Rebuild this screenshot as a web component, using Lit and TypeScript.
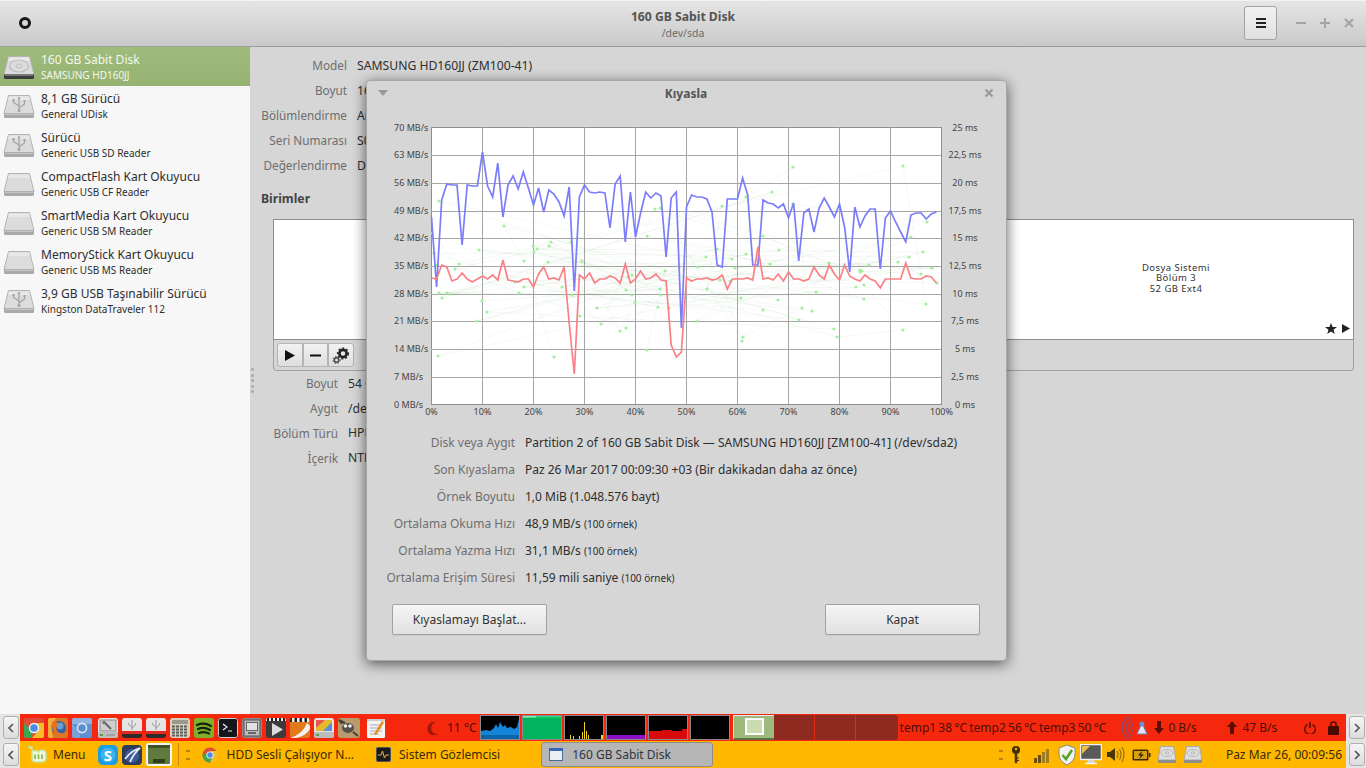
import { LitElement, html, css, svg } from 'lit';
import { customElement } from 'lit/decorators.js';

const icon = (body: unknown, w = 20, h = 20, cls = '') =>
  html`<svg class=${cls} width=${w} height=${h} viewBox="0 0 ${w} ${h}">${body}</svg>`;

// sidebar drive icons
const driveBase = (dark = false) => svg`
  <path d="M5.5 .5H26.5L31 18.5H1Z" fill="#dcdcdc" stroke="#b4b4b4"/>
  <path d="M6 1.5H26L27 5H5Z" fill="#e8e8e8"/>
  <path d="M1 18.5H31V21.5Q31 23 29.5 23H2.5Q1 23 1 21.5Z" fill=${dark ? '#3c3c3c' : '#a9a9a9'}/>
  <path d="M2 19.5H30" stroke=${dark ? '#777' : '#c6c6c6'}/>`;
const hddGlyph = svg`
  <ellipse cx="16" cy="10" rx="9.5" ry="6" fill="none" stroke="#bcbcbc" stroke-width="1.2"/>
  <ellipse cx="16" cy="10" rx="3" ry="2" fill="none" stroke="#bcbcbc"/>`;
const usbGlyph = svg`
  <path d="M16 3V15M16 11L10.5 7.5V5.5M16 13L21.5 9V6.5" fill="none" stroke="#a2a2a2" stroke-width="1.2"/>
  <path d="M16 1.5L14.4 4H17.6ZM9.4 4H11.6V6H9.4ZM20.5 5H22.5V7H20.5Z" fill="#a2a2a2"/>
  <circle cx="16" cy="15.5" r="1.5" fill="#a2a2a2"/>`;
const driveIcon = (kind: string) =>
  icon(svg`${driveBase(kind === 'hdd')}${kind === 'hdd' ? hddGlyph : kind === 'usb' ? usbGlyph : ''}`, 32, 24);

const panelDisk = icon(svg`
  <path d="M3.5 1.5H16.5L19 15H1Z" fill="#dedede" stroke="#a8a8a8"/>
  <ellipse cx="10" cy="8" rx="6" ry="3.5" fill="none" stroke="#b8b8b8"/>
  <ellipse cx="10" cy="8" rx="2" ry="1.2" fill="none" stroke="#b8b8b8"/>
  <path d="M1 15H19V17Q19 18 18 18H2Q1 18 1 17Z" fill="#8e8e8e"/>`);

const chevronLeft = icon(svg`<path d="M5 1L1 5L5 9" fill="none" stroke="#555" stroke-width="1.600"/>`, 6, 10);
const chevronRight = icon(svg`<path d="M1 1L5 5L1 9" fill="none" stroke="#555" stroke-width="1.600"/>`, 6, 10);

const launchers = [
  // chrome
  svg`<rect width="20" height="20" fill="#dd4b39"/>
    <polygon points="0,5 9,14 7,20 0,20" fill="#3aa757"/>
    <polygon points="20,5 10,5 14,13 8,20 20,20" fill="#f2bf2a"/>
    <circle cx="10" cy="10" r="5.2" fill="#f4f4f4"/><circle cx="10" cy="10" r="3.8" fill="#4a8be8"/>`,
  // firefox
  svg`<rect width="20" height="20" fill="#d8782a"/><path d="M0 0H8L3 8L5 20H0Z" fill="#efb23a"/>
    <circle cx="11" cy="10" r="7" fill="#2f63a8"/><circle cx="12" cy="8" r="3.5" fill="#6d9bd4"/>
    <path d="M4 3Q3 12 8 17Q14 20 18 14Q12 17 9 13Q7 9 11 5Q7 4 4 3Z" fill="#e9711c"/>`,
  // chromium
  svg`<rect width="20" height="20" fill="#5f90cf"/><path d="M0 6H20V0H0Z" fill="#8fb2de"/>
    <path d="M0 20V5L8 15V20Z" fill="#78a2d8"/>
    <circle cx="10" cy="10" r="5.4" fill="#dbe6f4"/><circle cx="10" cy="10" r="3.8" fill="#5c8fd0"/>`,
  // disk tool
  svg`<rect width="20" height="20" rx="2" fill="#e6e6e6"/><rect x="2" y="2" width="16" height="11" fill="#cfcfcf" stroke="#8c8c8c"/>
    <path d="M6 4L13 11" stroke="#666" stroke-width="2"/><circle cx="6" cy="4.5" r="1.8" fill="#777"/>
    <rect y="14" width="20" height="6" fill="#bdbdbd"/><rect x="2" y="16" width="3" height="2" fill="#5a9a4a"/><path d="M8 17H17" stroke="#888"/>`,
  // usb drives
  svg`<rect width="20" height="15" rx="2" fill="#e4e4e4"/><path d="M10 2V12M10 9L6.5 6.5V5M10 10L13.5 7V5.5" stroke="#999" fill="none"/>
    <rect y="13" width="20" height="3" fill="#e02a20"/><path d="M0 16H20V18Q20 20 18 20H2Q0 20 0 18Z" fill="#2c2c2c"/>`,
  svg`<rect width="20" height="15" rx="2" fill="#e4e4e4"/><path d="M10 2V12M10 9L6.5 6.5V5M10 10L13.5 7V5.5" stroke="#999" fill="none"/>
    <rect y="13" width="20" height="3" fill="#e02a20"/><path d="M0 16H20V18Q20 20 18 20H2Q0 20 0 18Z" fill="#2c2c2c"/>`,
  // calculator
  svg`<rect width="20" height="20" rx="2" fill="#d6d0bc"/><rect x="2" y="2" width="16" height="4" fill="#9a9a8c"/>
    ${[8, 11, 14, 17].flatMap(y => [2, 6, 10, 14].map(x => svg`<rect x=${x} y=${y - 0.5} width="3" height="2" fill="#5c5c5c"/>`))}`,
  // spotify
  svg`<rect width="20" height="20" rx="2" fill="#7fb02a"/>
    <path d="M3 7Q10 4 17 8M4 11Q10 8.500 16 12M5 15Q10 13 15 15.500" fill="none" stroke="#16240a" stroke-width="2.200" stroke-linecap="round"/>`,
  // terminal
  svg`<rect width="20" height="20" rx="2" fill="#15151c"/><rect x=".5" y=".5" width="19" height="19" rx="2" fill="none" stroke="#cfcfd6"/>
    <path d="M5 6L9 9L5 12" fill="none" stroke="#e8e8e8" stroke-width="1.200"/><path d="M10 13H14" stroke="#e8e8e8" stroke-width="1.200"/>`,
  // screen viewer
  svg`<rect width="20" height="20" rx="2" fill="#8b8b8b"/><rect x="2" y="2" width="16" height="16" fill="#bcbcbc" stroke="#555"/>
    <rect x="4.500" y="4.500" width="11" height="8" fill="#e2e2e2" stroke="#666"/><rect x="6" y="14" width="8" height="2" fill="#666"/>`,
  // media player
  svg`<rect width="20" height="20" rx="2" fill="#3c3c3c"/><path d="M0 0H20V3H0Z" fill="#eee"/>
    ${[1, 5, 9, 13, 17].map(x => svg`<rect x=${x} width="2" height="3" fill="#222"/>`)}
    <path d="M6 5L17 11.500L6 18Z" fill="#dcdcdc"/>`,
  // video editor
  svg`<rect width="20" height="20" rx="2" fill="#e07a1a"/><path d="M0 0H20V4H0Z" fill="#222"/>
    ${[2, 7, 12, 17].map(x => svg`<rect x=${x} width="2.500" height="4" fill="#eee"/>`)}
    <path d="M0 20Q13 16 17 5L20 8V11Q16 18 6 20Z" fill="#f0f0f0"/>`,
  // partition chart
  svg`<rect width="20" height="20" rx="2" fill="#e4e4e4"/><rect x="2" y="2" width="16" height="11" fill="#e4b92c"/>
    <path d="M2 2H11L2 10Z" fill="#e05a50"/><path d="M9 13L18 4V13Z" fill="#5a8fd8"/>
    <rect y="14" width="20" height="6" fill="#bcbcbc"/><rect x="2" y="16" width="3" height="2" fill="#5a9a4a"/>`,
  // gimp
  svg`<rect width="22" height="20" rx="2" fill="#b89a6c"/><ellipse cx="10" cy="10" rx="6" ry="5" fill="#55504a"/>
    <circle cx="7.500" cy="8" r="1.800" fill="#eee"/><circle cx="12" cy="8" r="1.800" fill="#eee"/>
    <path d="M4 6L1 2L7 5M15 14L20 18" stroke="#44403a" stroke-width="2" fill="none"/>`,
  // notes
  svg`<rect x="1" y="1" width="18" height="19" rx="1" fill="#f4f4f0"/><path d="M1 1H19V3H1Z" fill="#ccc"/>
    <path d="M4 7H16M4 10H16M4 13H16M4 16H13" stroke="#a8a8b8"/>
    <path d="M8 16L16 3L18 4.500L10 17Z" fill="#e8891a"/>`,
];
const launcherShift = ['', '', '', 'gap2', '', '', '', '', '', '', '', '', '', '', 'gap2'];

@customElement('bench-chart')
class BenchChart extends LitElement {
  static styles = css`
    :host { display: block; }
    svg { display: block; font-family: 'Noto Sans', sans-serif; font-size: 9px; fill: #444; }
    .plot { fill: #fff; stroke: #8f8f8f; }
    .grid { stroke: #a6a6a6; stroke-width: 1; }
    .seek { fill: none; stroke: rgba(120, 165, 120, .09); stroke-width: .8; }
    .dot { fill: #a2f09e; stroke: none; }
    .read { fill: none; stroke: #7b7dfa; stroke-width: 1.7; }
    .write { fill: none; stroke: #fb8086; stroke-width: 1.7; }
  `;

  static readY = [217, 287, 200, 184, 185, 185, 245, 185, 186, 186, 152, 186, 197, 163, 217, 185, 176, 189, 172, 188,
    205, 188, 212, 190, 194, 202, 216, 187, 291, 197, 185, 192, 193, 192, 193, 228, 184, 176, 242, 192,
    237, 213, 192, 198, 193, 196, 257, 198, 192, 328, 207, 195, 197, 197, 199, 212, 265, 267, 199, 199,
    199, 178, 195, 265, 265, 200, 203, 204, 208, 204, 218, 203, 261, 213, 209, 232, 208, 198, 207, 217,
    204, 227, 272, 207, 227, 216, 209, 209, 269, 218, 211, 222, 232, 242, 215, 213, 213, 219, 214, 212];

  static writeY = [278, 279, 265, 267, 281, 279, 273, 279, 282, 279, 276, 279, 275, 280, 260, 280, 281, 282, 279, 279,
    287, 274, 267, 279, 278, 280, 267, 323, 374, 275, 279, 273, 283, 279, 279, 276, 278, 283, 264, 283,
    279, 271, 279, 278, 274, 280, 281, 345, 357, 352, 278, 281, 279, 279, 278, 280, 279, 275, 289, 279,
    279, 279, 278, 280, 247, 279, 278, 280, 274, 281, 272, 279, 279, 281, 279, 267, 275, 279, 265, 274,
    280, 265, 276, 279, 281, 275, 279, 281, 288, 279, 279, 279, 279, 263, 278, 279, 279, 276, 277, 283];

  // seek samples, page pixels
  static dots: [number, number][] = [
    [439, 201], [432, 233], [434, 253], [437, 265], [504, 226], [479, 250], [459, 264], [455, 269], [533, 246], [537, 249],
    [534, 252], [551, 242], [549, 246], [524, 261], [548, 262], [571, 242], [582, 261], [647, 236], [655, 209], [660, 208],
    [439, 293], [447, 293], [451, 294], [442, 298], [482, 301], [487, 312], [477, 321], [438, 356], [515, 282], [519, 293],
    [524, 287], [562, 287], [572, 295], [580, 316], [554, 357], [597, 308], [601, 324], [620, 331], [626, 328], [626, 290],
    [632, 295], [635, 302], [628, 277], [632, 275], [665, 271], [660, 289], [661, 295], [658, 307], [669, 308], [647, 350],
    [793, 167], [903, 166], [772, 192], [722, 206], [746, 197], [793, 204], [763, 236], [779, 250], [717, 249], [706, 257],
    [732, 259], [746, 254], [698, 267], [735, 268], [770, 264], [799, 253], [829, 263], [869, 265], [898, 262], [909, 257],
    [923, 252], [932, 268], [911, 237], [927, 222], [720, 280], [707, 289], [730, 281], [741, 298], [763, 310], [778, 300],
    [816, 292], [802, 308], [812, 311], [799, 320], [834, 329], [837, 337], [743, 337], [742, 341], [697, 321], [860, 272],
    [862, 271], [856, 287], [864, 285], [864, 299], [921, 274], [932, 268], [937, 283], [926, 304], [903, 330], [860, 270],
  ];

  private seekPath() {
    // keep the sample order stable between renders
    let seed = 20170326;
    const next = () => (seed = (seed * 1664525 + 1013904223) >>> 0) / 4294967296;
    const order = BenchChart.dots.slice();
    for (let i = order.length - 1; i > 0; i--) {
      const j = Math.floor(next() * (i + 1));
      [order[i], order[j]] = [order[j], order[i]];
    }
    return 'M' + order.map(p => p.join(' ')).join('L');
  }

  private line(ys: number[]) {
    return 'M' + ys.map((y, i) => `${(431.5 + i * 5.1).toFixed(1)} ${y}`).join('L');
  }

  render() {
    const top = 127.5;
    const step = 277 / 10;
    const rowY = Array.from({ length: 11 }, (_, i) => top + i * step);
    const colX = Array.from({ length: 11 }, (_, i) => 431.5 + i * 51);
    const rates = [70, 63, 56, 49, 42, 35, 28, 21, 14, 7, 0];
    const times = ['25', '22,5', '20', '17,5', '15', '12,5', '10', '7,5', '5', '2,5', '0'];
    return html`<svg width="639" height="321" viewBox="367 107 639 321">
      <rect class="plot" x="431.5" y="127.5" width="510" height="277"/>
      ${rowY.slice(1, 10).map(y => svg`<path class="grid" d="M431 ${Math.round(y) + 0.5}H941"/>`)}
      ${colX.slice(1, 10).map(x => svg`<path class="grid" d="M${x} 127V404"/>`)}
      <path class="seek" d=${this.seekPath()}/>
      ${BenchChart.dots.map(([x, y]) => svg`<circle class="dot" cx=${x} cy=${y} r="1.600"/>`)}
      <path class="read" d=${this.line(BenchChart.readY)}/>
      <path class="write" d=${this.line(BenchChart.writeY)}/>
      ${rates.map((r, i) => svg`<text x="394" y=${rowY[i] + 3}>${r} MB/s</text>`)}
      ${times.map((t, i) => svg`<text x="965" y=${rowY[i] + 3} text-anchor="middle">${t} ms</text>`)}
      ${colX.map((x, i) => svg`<text x=${x} y="415" text-anchor="middle">${i * 10}%</text>`)}
    </svg>`;
  }
}

@customElement('bench-dialog')
class BenchDialog extends LitElement {
  static styles = css`
    :host {
      position: absolute; left: 366px; top: 80px; width: 641px; height: 581px; box-sizing: border-box;
      display: flex; flex-direction: column; background: #d6d6d6; border: 1px solid #a8a8a8; border-radius: 4px;
      box-shadow: 0 3px 14px rgba(0, 0, 0, .6); font: 12px 'Noto Sans', sans-serif; color: #2e2e2e;
    }
    .title { height: 26px; box-sizing: border-box; flex: none; display: flex; align-items: center; justify-content: space-between; padding: 0 12px 2px 11px; }
    .title b { font-weight: 700; color: #555; }
    .title svg { display: block; }
    .info { display: grid; grid-template-columns: 148px 1fr; column-gap: 10px; grid-auto-rows: 27px; align-items: center; margin-top: 1px; }
    .k { text-align: right; color: #6e6e6e; white-space: nowrap; }
    .v { white-space: nowrap; }
    small { font-size: 10px; }
    .actions { display: flex; justify-content: space-between; padding: 13px 26px 0 25px; }
    button {
      width: 155px; height: 31px; font: 12px 'Noto Sans', sans-serif; color: #333; border: 1px solid #a2a2a2; border-radius: 2px;
      background: linear-gradient(#f6f6f6, #e0e0e0); box-shadow: 0 1px 0 rgba(0,0,0,.06);
    }
  `;

  render() {
    return html`
      <div class="title">
        ${icon(svg`<path d="M0 1H10L5 7Z" fill="#9a9a9a"/>`, 10, 8)}
        <b>Kıyasla</b>
        ${icon(svg`<path d="M1.500 1.500L8.500 8.500M8.500 1.500L1.500 8.500" stroke="#9a9a9a" stroke-width="2.200"/>`, 10, 10)}
      </div>
      <bench-chart></bench-chart>
      <div class="info">
        <div class="k">Disk veya Aygıt</div><div class="v">Partition 2 of 160 GB Sabit Disk — SAMSUNG HD160JJ [ZM100-41] (/dev/sda2)</div>
        <div class="k">Son Kıyaslama</div><div class="v">Paz 26 Mar 2017 00:09:30 +03 (Bir dakikadan daha az önce)</div>
        <div class="k">Örnek Boyutu</div><div class="v">1,0 MiB (1.048.576 bayt)</div>
        <div class="k">Ortalama Okuma Hızı</div><div class="v">48,9 MB/s <small>(100 örnek)</small></div>
        <div class="k">Ortalama Yazma Hızı</div><div class="v">31,1 MB/s <small>(100 örnek)</small></div>
        <div class="k">Ortalama Erişim Süresi</div><div class="v">11,59 mili saniye <small>(100 örnek)</small></div>
      </div>
      <div class="actions">
        <button>Kıyaslamayı Başlat...</button>
        <button>Kapat</button>
      </div>
    `;
  }
}

@customElement('disk-window')
class DiskWindow extends LitElement {
  static styles = css`
    :host { display: flex; flex-direction: column; height: 714px; font: 12.2px 'Noto Sans', sans-serif; color: #2e2e2e; }
    header {
      height: 47px; flex: none; box-sizing: border-box; border-bottom: 1px solid #9c9c9c; display: flex; align-items: center;
      background: linear-gradient(#e6e6e6, #c9c9c9); box-shadow: inset 0 1px 0 #f4f4f4; padding: 0 10px 0 18px;
    }
    .head-title { flex: 1; text-align: center; line-height: 16px; padding-left: 90px; padding-top: 3px; }
    .head-title b { display: block; color: #555; font-weight: 700; }
    .head-title span { color: #6c6c6c; font-size: 10.5px; }
    .menu {
      width: 33px; height: 34px; box-sizing: border-box; border: 1px solid #a2a2a2; border-radius: 3px; margin-right: 17px;
      background: linear-gradient(#f2f2f2, #e0e0e0); display: flex; align-items: center; justify-content: center;
    }
    .wm { display: flex; gap: 10px; }
    .wm svg, .menu svg, header > svg { display: block; }
    .body { flex: 1; display: flex; min-height: 0; }
    aside { width: 250px; flex: none; background: #f7f7f7; }
    .drive { height: 39px; display: flex; align-items: center; gap: 6px; padding-left: 3px; font-size: 12px; }
    .drive svg { flex: none; margin-top: 2px; }
    .drive.on { background: linear-gradient(#9fbc7c, #95b272); color: #f4f8ee; }
    .drive .text { padding-top: 1px; }
    .drive b { display: block; font-weight: 400; line-height: 16px; }
    .drive span { font-size: 10px; line-height: 15px; display: block; }
    main { flex: 1; background: #d6d6d6; position: relative; padding-top: 6px; min-width: 0; }
    .rows { display: grid; grid-template-columns: 97px 1fr; column-gap: 10px; grid-auto-rows: 25px; align-items: center; }
    .rows.low { grid-template-columns: 88px 1fr; grid-auto-rows: 24.8px; }
    .k { text-align: right; color: #6e6e6e; white-space: nowrap; font-size: 11.75px; }
    .rows:not(.low) .k { padding-bottom: 2px; }
    .v { white-space: nowrap; }
    h3 { font: 700 12.2px/17px 'Noto Sans', sans-serif; margin: 12px 0 12px 11px; color: #444; }
    .volumes { margin-left: 23px; width: 1081px; height: 121px; box-sizing: border-box; border: 1px solid #8e8e8e; background: #fff; display: flex; }
    .part { flex: 1; }
    .part.fs {
      flex: none; width: 354px; position: relative; display: flex; flex-direction: column; align-items: center; justify-content: center;
      font-size: 9.500px; line-height: 10.500px; letter-spacing: .45px; padding-bottom: 2px; box-sizing: border-box; color: #333;
    }
    .marks { position: absolute; right: 3px; bottom: 5px; display: flex; gap: 5px; }
    .tools {
      margin-left: 23px; width: 1081px; height: 31px; box-sizing: border-box; border: 1px solid #a0a0a0; border-top: 0; border-radius: 0 0 4px 4px;
      padding: 3px 3px; display: flex;
    }
    .tools button {
      width: 25.500px; height: 24px; padding: 0; border: 1px solid #b4b4b4; background: linear-gradient(#f2f2f2, #dedede);
      display: flex; align-items: center; justify-content: center; border-radius: 0;
    }
    .tools button:first-child { border-radius: 3px 0 0 3px; }
    .tools button:last-child { border-radius: 0 3px 3px 0; }
    .sash { position: absolute; left: 1px; top: 321px; display: grid; gap: 2.500px; }
    .sash i { display: block; width: 3px; height: 3px; background: #a8a8a8; border-radius: 50%; }
  `;

  private drives = [
    ['hdd', '160 GB Sabit Disk', 'SAMSUNG HD160JJ'],
    ['usb', '8,1 GB Sürücü', 'General UDisk'],
    ['usb', 'Sürücü', 'Generic USB SD Reader'],
    ['card', 'CompactFlash Kart Okuyucu', 'Generic USB CF Reader'],
    ['card', 'SmartMedia Kart Okuyucu', 'Generic USB SM Reader'],
    ['card', 'MemoryStick Kart Okuyucu', 'Generic USB MS Reader'],
    ['usb', '3,9 GB USB Taşınabilir Sürücü', 'Kingston DataTraveler 112'],
  ];

  render() {
    return html`
      <header>
        ${icon(svg`<circle cx="7" cy="7" r="4.500" fill="none" stroke="#161616" stroke-width="3"/>`, 14, 14)}
        <div class="head-title"><b>160 GB Sabit Disk</b><span>/dev/sda</span></div>
        <div class="menu">${icon(svg`<path d="M0 2H10M0 6H10M0 10H10" stroke="#222" stroke-width="2"/>`, 10, 12)}</div>
        <div class="wm">
          ${icon(svg`<path d="M2 8H12" stroke="#a4a4a4" stroke-width="2"/>`, 14, 16)}
          ${icon(svg`<path d="M2 8H12M7 3V13" stroke="#a4a4a4" stroke-width="2"/>`, 14, 16)}
          ${icon(svg`<path d="M3 4L11 12M11 4L3 12" stroke="#a4a4a4" stroke-width="2.200"/>`, 14, 16)}
        </div>
      </header>
      <div class="body">
        <aside>
          ${this.drives.map(([kind, name, sub], i) => html`
            <div class="drive ${i === 0 ? 'on' : ''}">
              ${driveIcon(kind)}
              <div class="text"><b>${name}</b><span>${sub}</span></div>
            </div>`)}
        </aside>
        <main>
          <div class="rows">
            <div class="k">Model</div><div class="v">SAMSUNG HD160JJ (ZM100-41)</div>
            <div class="k">Boyut</div><div class="v">160 GB</div>
            <div class="k">Bölümlendirme</div><div class="v">Ana</div>
            <div class="k">Seri Numarası</div><div class="v">S0DFJ</div>
            <div class="k">Değerlendirme</div><div class="v">Disk</div>
          </div>
          <h3>Birimler</h3>
          <div class="volumes">
            <div class="part"></div>
            <div class="part fs">
              <div>Dosya Sistemi</div><div>Bölüm 3</div><div>52 GB Ext4</div>
              <div class="marks">
                ${icon(svg`<path d="M6 0L7.600 4H12L8.500 6.700L9.800 11L6 8.400L2.200 11L3.500 6.700L0 4H4.400Z" fill="#222"/>`, 12, 11)}
                ${icon(svg`<path d="M0 1L8 5.500L0 10Z" fill="#222"/>`, 8, 11)}
              </div>
            </div>
          </div>
          <div class="tools">
            <button>${icon(svg`<path d="M1 1L11 6.500L1 12Z" fill="#111"/>`, 12, 13)}</button>
            <button>${icon(svg`<path d="M0 1.500H11" stroke="#111" stroke-width="2"/>`, 11, 3)}</button>
            <button>${icon(svg`
              <circle cx="11" cy="6.500" r="3.600" fill="none" stroke="#222" stroke-width="2.600"/>
              <circle cx="11" cy="6.500" r="5.400" fill="none" stroke="#222" stroke-width="1.400" stroke-dasharray="2 2"/>
              <circle cx="4.500" cy="13" r="2.200" fill="none" stroke="#444" stroke-width="1.400"/>
              <circle cx="4.500" cy="13" r="3.600" fill="none" stroke="#444" stroke-width="1" stroke-dasharray="1.500 1.500"/>`, 17, 17)}</button>
          </div>
          <div class="rows low">
            <div class="k">Boyut</div><div class="v">54 GB</div>
            <div class="k">Aygıt</div><div class="v">/dev</div>
            <div class="k">Bölüm Türü</div><div class="v">HPFS</div>
            <div class="k">İçerik</div><div class="v">NTFS</div>
          </div>
          <div class="sash">${[0, 1, 2, 3, 4].map(() => html`<i></i>`)}</div>
        </main>
      </div>
    `;
  }
}

@customElement('bottom-panels')
class BottomPanels extends LitElement {
  static styles = css`
    :host { display: block; height: 54px; background: #e4e4e4; font: 12px 'Noto Sans', sans-serif; }
    .row { display: flex; height: 27px; }
    .end {
      width: 20px; flex: none; display: flex; align-items: center; justify-content: center; padding-left: 1px; box-sizing: border-box;
    }
    .end div {
      width: 16px; height: 23px; border: 1px solid #b0b0b0; border-radius: 3px; background: linear-gradient(#f6f6f6, #dcdcdc);
      display: flex; align-items: center; justify-content: center; box-sizing: border-box;
    }
    .end.right { padding-left: 2px; }
    .bar { flex: 1; display: flex; align-items: center; min-width: 0; white-space: nowrap; }
    .red { background: #f5280e; color: #4a1006; padding-left: 4px; }
    .yellow { background: #ffb700; color: #3c2a06; }
    svg { display: block; flex: none; }
    .launch { display: flex; gap: 4px; }
    .launch svg { border-radius: 2px; }
    .gap2 { margin-left: 2px; }
    .weather { margin-left: 41px; display: flex; align-items: center; gap: 9px; }
    .graphs { display: flex; gap: 2px; margin-left: 3px; }
    .graph { width: 40px; height: 25px; box-sizing: border-box; border: 1px solid #8a8a8a; background: #000; }
    .spaces { display: flex; margin-left: 3px; height: 25px; }
    .ws { width: 41px; background: #8f2a20; border-right: 1px solid #e32a14; box-sizing: border-box; }
    .ws:last-child { border-right: 0; border-radius: 0 3px 3px 0; width: 42px; }
    .ws.on {
      background: #9db97c; border: 1px solid #e8e8e8; border-bottom: 2px solid #5c7040; border-right: 0; display: flex; padding: 2px 0 0 11px;
    }
    .ws.on i { display: block; width: 19px; height: 17px; box-sizing: border-box; border: 2px solid #fff; background: #cbdcb2; }
    .temps { margin-left: 2px; word-spacing: -.9px; }
    .antenna { margin-left: 13px; }
    .antenna2 { margin-left: 1px; }
    .down { margin-left: 5px; }
    .rate { margin-left: 4px; }
    .up { margin-left: 31px; }
    .up + .rate { margin-left: 5px; }
    .power { margin-left: 27px; }
    .lock { margin-left: 12px; }
    .mint { margin-left: 7px; }
    .menu-label { margin-left: 6px; }
    .quick { display: flex; gap: 4px; margin-left: 13px; align-items: center; }
    .desk { width: 26px; height: 23px; box-sizing: border-box; border: 2px solid #f4f4f4; border-radius: 3px; background: #5f7a3c; display: flex; flex-direction: column; }
    .desk::before { content: ''; height: 3px; background: #3d5228; }
    .desk::after { content: ''; height: 4px; width: 12px; margin: auto auto 1px; background: #2d3f1b; }
    .sep { width: 1px; height: 23px; background: #c78a05; margin-left: 6px; }
    .handle { margin-left: 7px; width: 4px; height: 10px; border-top: 2px dotted #b58410; border-bottom: 2px dotted #b58410; box-sizing: border-box; }
    .task-ic { margin-left: 12px; }
    .task { margin-left: 8px; }
    .ic2 { margin-left: 22px; }
    .active {
      margin-left: 41px; width: 172px; height: 25px; box-sizing: border-box; display: flex; align-items: center; gap: 9px; padding-left: 7px;
      background: #b6b6b6; border: 1px solid #8d8d8d; border-radius: 3px; color: #2d3540;
    }
    .tray { margin-left: auto; display: flex; align-items: center; }
    .tray .handle { margin-left: 0; margin-right: 8px; }
    .m3 { margin-left: 3px; }
    .m5 { margin-left: 5px; }
    .m6 { margin-left: 6px; }
    .m7 { margin-left: 7px; }
    .m8 { margin-left: 8px; }
    .m13 { margin-left: 13px; }
    .clock { margin-left: 23px; margin-right: 4px; }
  `;

  private graph(body: unknown) {
    return html`<svg class="graph" viewBox="0 0 38 23" preserveAspectRatio="none">${body}</svg>`;
  }

  render() {
    const cpu = 'M0 15L5 14L9 15L13 12L15 8L17 12L19 6L22 11L24 9L26 12L30 11L33 13L36 11L38 3V23H0Z';
    return html`
      <div class="row">
        <div class="end"><div>${chevronLeft}</div></div>
        <div class="bar red">
          <div class="launch">${launchers.map((l, i) => html`<svg class=${launcherShift[i]} width=${i === 13 ? 22 : 20} height="20" viewBox="0 0 ${i === 13 ? 22 : 20} 20">${l}</svg>`)}</div>
          <div class="weather">
            ${icon(svg`<path d="M9 1A7 7 0 1 0 12 13A6 6 0 0 1 9 1Z" fill="#a01808"/>`, 11, 14)}
            <span>11 °C</span>
          </div>
          <div class="graphs">
            ${this.graph(svg`<path d=${cpu} fill="#1484d8"/><path d="M0 19H38V23H0Z" fill="#0a64a8"/>`)}
            ${this.graph(svg`<rect width="38" height="23" fill="#00b35c"/><rect width="38" height="1.500" fill="#28d884"/><rect width="13" height="1.500" fill="#8fe8b8"/>`)}
            ${this.graph(svg`<path d="M5 23V19H6V23ZM8 23V20H9V23ZM14 23V20H15V23ZM17 23V16H18V23ZM19 23V6H20V23ZM21 23V15H22V23ZM23 23V19H24V23ZM36 23V19H38V23Z" fill="#f2d21a"/>`)}
            ${this.graph(svg`<rect y="19" width="38" height="4" fill="#8a10c8"/>`)}
            ${this.graph(svg`<path d="M0 15H13V14H23V15H33V13H38V23H0Z" fill="#d80a0a"/>`)}
            ${this.graph('')}
          </div>
          <div class="spaces">
            <div class="ws on"><i></i></div><div class="ws"></div><div class="ws"></div><div class="ws"></div>
          </div>
          <span class="temps">temp1 38 °C temp2 56 °C temp3 50 °C</span>
          ${icon(svg`<path d="M10 1Q2 6 3 13T10 23" fill="none" stroke="#7f4a70" stroke-width="1.500"/><path d="M12 5Q6 9 7 13T12 20" fill="none" stroke="#7f4a70" stroke-width="1.500"/><path d="M14 8Q10 12 14 16" fill="none" stroke="#7f4a70" stroke-width="1.500"/>`, 15, 24, 'antenna')}
          ${icon(svg`<path d="M7 3L2 14H12Z" fill="#dfe6f2" stroke="#6c7fb0"/><circle cx="7" cy="4" r="2.500" fill="#6c8fd8"/>`, 14, 16, 'antenna2')}
          ${icon(svg`<path d="M3 0H7V7H10L5 13L0 7H3Z" fill="#5a0f06"/>`, 10, 13, 'down')}
          <span class="rate">0 B/s</span>
          ${icon(svg`<path d="M3 13H7V6H10L5 0L0 6H3Z" fill="#5a0f06"/>`, 10, 13, 'up')}
          <span class="rate">47 B/s</span>
          ${icon(svg`<path d="M3.500 3.500A5.300 5.300 0 1 0 8.500 3.500" fill="none" stroke="#6c1206" stroke-width="1.600"/><path d="M6 1V7" stroke="#6c1206" stroke-width="1.800"/>`, 12, 13, 'power')}
          ${icon(svg`<path d="M3 6V3Q3 1 5.500 1T8 3V6" fill="none" stroke="#4a0a02" stroke-width="1.500"/><rect y="5" width="11" height="9" rx="1" fill="#4a0a02"/>`, 11, 14, 'lock')}
        </div>
        <div class="end right"><div>${chevronRight}</div></div>
      </div>
      <div class="row">
        <div class="end"><div>${chevronLeft}</div></div>
        <div class="bar yellow">
          ${icon(svg`<path d="M1 1H5V12Q5 16 9 16H15Q19 16 19 12V8Q19 4 15 4Q12 4 11.500 6Q10 4 7 5" fill="#f0f7df" stroke="#c6e29a" stroke-width="1.600"/>
            <path d="M8 13V8.500M11.500 13V8.500M15 13V8.500" stroke="#86b848" stroke-width="1.700"/>`, 20, 18, 'mint')}
          <span class="menu-label">Menu</span>
          <div class="quick">
            ${icon(svg`<rect width="20" height="20" rx="5" fill="#1c9ce4"/><circle cx="10" cy="10" r="7.500" fill="#3cb4f0"/><text x="10" y="15.500" text-anchor="middle" font-family="Noto Sans" font-weight="700" font-size="15" fill="#fff">S</text>`)}
            ${icon(svg`<rect width="20" height="20" rx="4" fill="#2e3a5c"/><circle cx="10" cy="11" r="7" fill="#3c5a98"/><path d="M3 14Q10 5 18 3Q12 8 8 17" fill="none" stroke="#e6ecf6" stroke-width="1.800"/>`)}
            <div class="desk"></div>
          </div>
          <div class="sep"></div>
          <div class="handle"></div>
          ${icon(svg`<circle cx="8" cy="8" r="7.500" fill="#dd4b39"/><path d="M.5 8A7.500 7.500 0 0 0 8 15.500L11.500 9L5 6Z" fill="#3aa757"/><path d="M8 4H15A7.500 7.500 0 0 1 8 15.500L11 9Z" fill="#f2bf2a"/><circle cx="8" cy="8" r="3.600" fill="#f4f4f4"/><circle cx="8" cy="8" r="2.700" fill="#4a8be8"/>`, 16, 16, 'task-ic')}
          <span class="task">HDD Sesli Çalışıyor N...</span>
          ${icon(svg`<rect width="15" height="15" rx="2" fill="#1a1a1a" stroke="#8c8c8c"/><path d="M2 8H5L6.500 4L8.500 11L10 8H13" fill="none" stroke="#e2b84a"/>`, 15, 15, 'ic2')}
          <span class="task">Sistem Gözlemcisi</span>
          <div class="active">
            ${icon(svg`<rect x=".5" y=".5" width="13" height="12" fill="#eceff2" stroke="#4a6a9c"/><rect width="14" height="3" fill="#3a67b0"/>`, 14, 13)}
            <span>160 GB Sabit Disk</span>
          </div>
          <div class="tray">
            <div class="handle"></div>
            ${icon(svg`<circle cx="5" cy="5" r="4" fill="#40300a"/><circle cx="5" cy="4" r="1.200" fill="#ffb700"/><path d="M3.700 8V17L5 19L6.300 17V8Z" fill="#4a3608"/><path d="M6 13H8M6 15.500H8" stroke="#4a3608"/>`, 10, 20)}
            ${icon(svg`<rect y="11" width="3" height="5" fill="#6a4c08"/><rect x="4" y="8" width="3" height="8" fill="#6a4c08"/><rect x="8" y="5" width="3" height="11" fill="#a07c1c"/><rect x="12" y="2" width="3" height="14" fill="#a07c1c"/>`, 15, 16, 'm13')}
            ${icon(svg`<path d="M10 1L18 4V10Q18 17 10 21Q2 17 2 10V4Z" fill="#f2f2f2" stroke="#8a8a78"/><path d="M5.500 11L9 15L15 6" fill="none" stroke="#58a02c" stroke-width="2.600"/>`, 20, 22, 'm8')}
            ${icon(svg`<rect x=".5" y=".5" width="21" height="15" fill="#5a5a58" stroke="#f2f2f2" stroke-width="1.500"/><path d="M2 2H10L2 10Z" fill="#e8c04a"/><path d="M8 16H14L15 19H7Z" fill="#d8d8d8"/><path d="M5 19.500H17" stroke="#f4f4f4" stroke-width="1.500"/>`, 22, 21, 'm3')}
            ${icon(svg`<path d="M0 6H3L8 2V15L3 11H0Z" fill="#4a3608"/><path d="M10 5Q12 8.500 10 12M12.500 3Q15.500 8.500 12.500 14M15 1Q19 8.500 15 16" fill="none" stroke="#9a7412" stroke-width="1.300"/>`, 18, 17, 'm5')}
            ${icon(svg`<rect x=".5" y=".5" width="16" height="11" rx="1.500" fill="#3a2c0a"/><rect x="2" y="2" width="13" height="8" fill="#d8a010"/><rect x="17" y="4" width="1.500" height="4" fill="#3a2c0a"/><path d="M10 2L6 6.500H9L7 10L12 5.500H9Z" fill="#2a2006"/>`, 19, 12, 'm7')}
            <span class="m6">${panelDisk}</span>
            <span class="m6">${panelDisk}</span>
            <span class="clock">Paz Mar 26, 00:09:56</span>
          </div>
        </div>
        <div class="end right"><div>${chevronRight}</div></div>
      </div>
    `;
  }
}

@customElement('app-root')
export class AppRoot extends LitElement {
  static styles = css`
    :host { display: block; position: relative; width: 1366px; height: 768px; overflow: hidden; background: #d6d6d6; }
  `;

  render() {
    return html`
      <disk-window></disk-window>
      <bench-dialog></bench-dialog>
      <bottom-panels></bottom-panels>
    `;
  }
}
